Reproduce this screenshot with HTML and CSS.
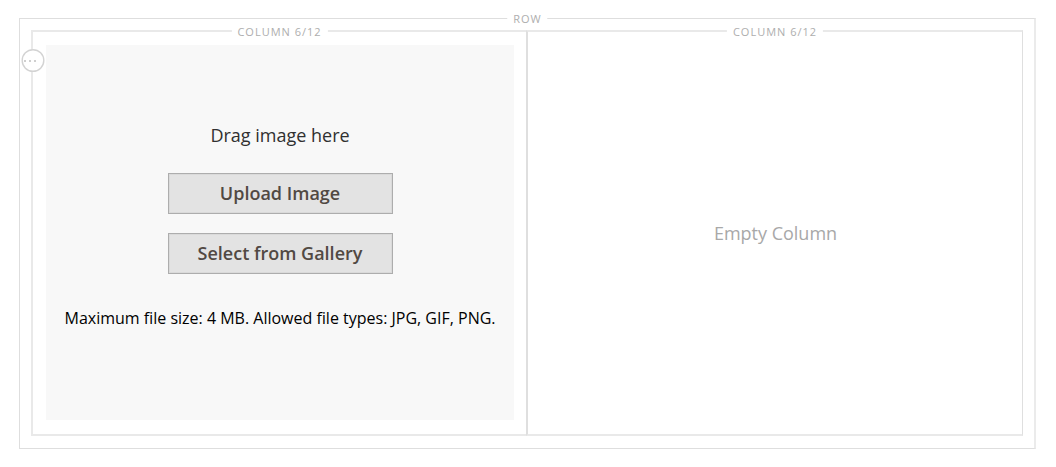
FILE: index.html
```html
<!DOCTYPE html>
<html lang="en">
<head>
<meta charset="utf-8">
<title>Page Builder Row</title>
<link rel="stylesheet" href="styles.css">
</head>
<body>
<main class="stage">
  <section class="row">
    <span class="label">ROW</span>
    <div class="column">
      <span class="label">COLUMN 6/12</span>
      <button class="options" type="button" aria-label="Column options">
        <svg width="24" height="24" viewBox="0 0 24 24" aria-hidden="true">
          <circle cx="12" cy="11.5" r="10.8" fill="#fff" stroke="#d3d3d3" stroke-width="1.4"/>
          <path d="M3 12h2M8 12h2M13 12h2" stroke="#cfcfcf" stroke-width="2"/>
        </svg>
      </button>
      <div class="uploader">
        <p class="drag">Drag image here</p>
        <button class="action" type="button">Upload Image</button>
        <button class="action" type="button">Select from Gallery</button>
        <p class="note">Maximum file size: 4 MB. Allowed file types: JPG, GIF, PNG.</p>
      </div>
    </div>
    <div class="column column-next">
      <span class="label">COLUMN 6/12</span>
      <p class="empty">Empty Column</p>
    </div>
  </section>
</main>
</body>
</html>
```
FILE: styles.css
```css
* {
  box-sizing: border-box;
}

body {
  margin: 0;
  background: #fff;
  font-family: "Open Sans", "Noto Sans", sans-serif;
}

p {
  margin: 0;
}

.stage {
  min-height: 100vh;
  display: flex;
  padding: 18px 20px 18px 19px;
}

.row {
  position: relative;
  flex: 1;
  display: grid;
  grid-template-columns: 1fr 1fr;
  padding: 11px 11px 12px;
  border: 1px solid #dedede;
  border-right: 2px solid #ebebeb;
}

.label {
  position: absolute;
  top: -8px;
  left: 50%;
  transform: translateX(-50%);
  padding: 0 5px 0 6px;
  background: #fff;
  color: #aeaeae;
  font-size: 11px;
  line-height: 16px;
  letter-spacing: 1px;
  white-space: nowrap;
}

.column {
  position: relative;
  display: flex;
  margin-right: -1px;
  padding: 13px 12px 14px 13px;
  border: 2px solid #e9e9e9;
  border-right-color: #dfdfdf;
}

.column > .label {
  padding: 0 6px;
}

.column-next {
  align-items: center;
  justify-content: center;
  margin-right: 0;
  margin-left: -1px;
  border-left-color: #dfdfdf;
  border-right: 1px solid #dfdfdf;
}

.options {
  position: absolute;
  top: 17px;
  left: -12px;
  display: flex;
  padding: 0;
  border: 0;
  border-radius: 50%;
  background: none;
}

.uploader {
  flex: 1;
  display: flex;
  flex-direction: column;
  align-items: center;
  justify-content: center;
  min-height: 375px;
  padding-bottom: 14px;
  background: #f8f8f8;
}

.drag {
  margin-bottom: 25px;
  color: #303030;
  font-size: 18px;
  line-height: 26px;
}

.action {
  width: 225px;
  height: 41px;
  margin-bottom: 19px;
  padding: 0;
  border: 1px solid #adadad;
  background: #e3e3e3;
  box-shadow: inset 0 0 0 1px #dadada;
  color: #514943;
  font-family: inherit;
  font-size: 18px;
  font-weight: 600;
  line-height: 24px;
}

.note {
  margin-top: 13px;
  color: #000;
  font-size: 16px;
  line-height: 24px;
}

.empty {
  color: #a8a8a8;
  font-size: 18px;
  line-height: 26px;
}
```
